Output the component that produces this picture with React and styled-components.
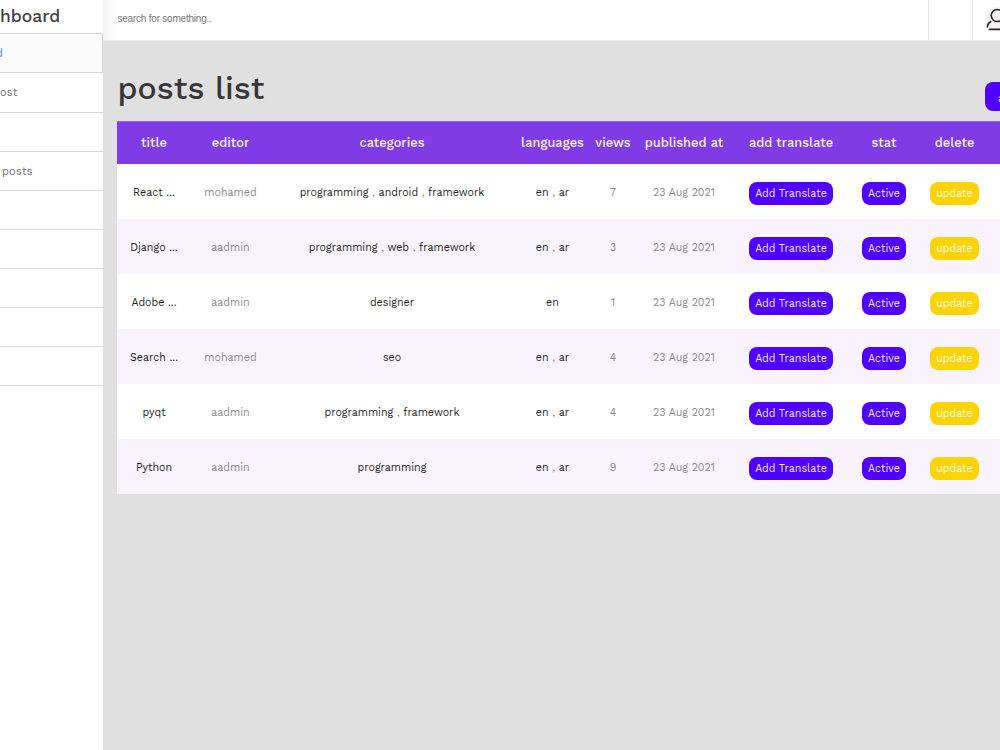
import styled, { createGlobalStyle } from 'styled-components'

const GlobalStyle = createGlobalStyle`
  * {
    box-sizing: border-box;
  }
  body {
    margin: 0;
    overflow: hidden;
    background: #e0e0e0;
    font-family: 'Work Sans', 'Inter', sans-serif;
  }
`
const Page = styled.div`
  display: flex;
  width: 100%;
  height: 100vh;
  overflow: hidden;
`
const Sidebar = styled.aside`
  flex: 0 0 103px;
  height: 100%;
  background: #fff;
  overflow: hidden;
  white-space: nowrap;
`
const Brand = styled.div`
  height: 33.4px;
  line-height: 33px;
  font-size: 17.5px;
  font-weight: 500;
  color: #423f42;
`
const MenuList = styled.ul`
  list-style: none;
  margin: 0;
  padding: 0;
  border-bottom: 1px solid #d9d9d9;
`
const MenuItem = styled.li`
  height: 39.08px;
  padding-top: 1px;
  line-height: 37px;
  text-indent: ${props => props.$indent || 0}px;
  border-top: 1px solid #d9d9d9;
  border-right: ${props => props.$active ? '1px solid #d4d4d4' : 'none'};
  background: ${props => props.$active ? '#fbfbfb' : '#fff'};
  color: ${props => props.$active ? '#5b78ff' : '#6e6e6e'};
  font-size: 11px;
  letter-spacing: 0.22px;
`
const Content = styled.div`
  flex: 1;
  min-width: 0;
  overflow: hidden;
`
const Topbar = styled.header`
  display: flex;
  height: 41px;
  border-bottom: 1px solid #e9e9e9;
  background: linear-gradient(to right, #f5f5f5, #fff 14px);
`
const SearchInput = styled.input`
  flex: 1;
  height: 37px;
  padding: 0 0 0 14.5px;
  border: none;
  outline: none;
  background: transparent;
  font-family: 'Liberation Sans', Arial, sans-serif;
  font-size: 10px;
  letter-spacing: -0.22px;
  &::placeholder {
    color: #757575;
  }
`
const TopbarCell = styled.div`
  flex: 0 0 ${props => props.$width}px;
  border-left: 1px solid #e6e6e6;
  overflow: hidden;
`
const Avatar = styled.svg`
  display: block;
  margin: 7px 0 0 11.5px;
`
const PageHead = styled.div`
  display: flex;
  justify-content: space-between;
  height: 80px;
  padding-left: 14.5px;
`
const PageTitle = styled.h1`
  margin: 0;
  padding-top: 27px;
  line-height: 40px;
  font-size: 32px;
  font-weight: 500;
  letter-spacing: 0.05px;
  color: #393539;
`
const AddButton = styled.button`
  flex: 0 0 15px;
  height: 29px;
  margin-top: 41px;
  padding: 3px 0 0 13px;
  border: none;
  border-radius: 8px 0 0 8px;
  background: #4f00ff;
  color: #fff;
  font-family: inherit;
  font-size: 11px;
  overflow: hidden;
`
const Table = styled.table`
  width: 950px;
  margin-left: 14px;
  border-collapse: collapse;
  table-layout: fixed;
  text-align: center;
`
const HeadRow = styled.tr`
  height: 43px;
  background: #7f3be6;
  box-shadow: inset 0 1px #9563e5;
`
const HeadCell = styled.th`
  width: ${props => props.$width}px;
  padding: 0;
  color: #f8f3ff;
  font-size: 12.8px;
  font-weight: 500;
  letter-spacing: 0.04px;
  white-space: nowrap;
`
const Row = styled.tr`
  height: 55px;
  background: #fff;
  &:nth-child(even) {
    background: #f8f3ff;
  }
`
const Cell = styled.td`
  padding: 1px 0 0;
  color: ${props => props.$dark ? '#231d23' : '#8c888c'};
  font-size: 10.7px;
  white-space: nowrap;
`
const Tag = styled.span`
  color: #231d23;
`
const ActionButton = styled.button`
  width: ${props => props.$width}px;
  height: 23px;
  margin-top: 3px;
  padding: 0;
  border: none;
  border-radius: 8px;
  background: ${props => props.$warning ? '#fcd405' : '#4f00ff'};
  color: ${props => props.$warning ? '#fffbe6' : '#f0eaff'};
  font-family: inherit;
  font-size: 10.7px;
  vertical-align: middle;
`

const menu = [
  { label: 'd', active: true, indent: -4 },
  { label: 'ost' },
  { label: '' },
  { label: 'posts', indent: 2 },
  { label: '' },
  { label: '' },
  { label: '' },
  { label: '' },
  { label: '' },
]

const columns = [
  { label: 'title', width: 74 },
  { label: 'editor', width: 79 },
  { label: 'categories', width: 244 },
  { label: 'languages', width: 77 },
  { label: 'views', width: 44 },
  { label: 'published at', width: 98 },
  { label: 'add translate', width: 116 },
  { label: 'stat', width: 70 },
  { label: 'delete', width: 71 },
  { label: '', width: 77 },
]

const posts = [
  { title: 'React ...', editor: 'mohamed', categories: ['programming', 'android', 'framework'], languages: ['en', 'ar'], views: 7 },
  { title: 'Django ...', editor: 'aadmin', categories: ['programming', 'web', 'framework'], languages: ['en', 'ar'], views: 3 },
  { title: 'Adobe ...', editor: 'aadmin', categories: ['designer'], languages: ['en'], views: 1 },
  { title: 'Search ...', editor: 'mohamed', categories: ['seo'], languages: ['en', 'ar'], views: 4 },
  { title: 'pyqt', editor: 'aadmin', categories: ['programming', 'framework'], languages: ['en', 'ar'], views: 4 },
  { title: 'Python', editor: 'aadmin', categories: ['programming'], languages: ['en', 'ar'], views: 9 },
]

function TagList({ items }) {
  return items.map((el, i) => (
    <span key={el}>{i > 0 && ' , '}<Tag>{el}</Tag></span>
  ))
}

function UserIcon() {
  return (
    <Avatar width="24" height="26" viewBox="0 0 24 26" fill="none">
      <circle cx="12" cy="12" r="12" fill="#f2f2f2" />
      <circle cx="12.2" cy="8.5" r="6" stroke="#2b2729" strokeWidth="1.6" />
      <path d="M6.3 14.2C3.8 15.5 2.4 17.8 2.3 20.5" stroke="#2b2729" strokeWidth="1.7" />
      <path d="M4.5 22.4H20" stroke="#2b2729" strokeWidth="1.8" strokeLinecap="round" />
      <path d="M22 20.5C21.8 17.8 20.3 15.5 18 14.2" stroke="#2b2729" strokeWidth="1.7" />
    </Avatar>
  )
}

export default function App() {
  return (
    <Page>
      <GlobalStyle />
      <Sidebar>
        <Brand>hboard</Brand>
        <MenuList>
          {menu.map((el, i) => (
            <MenuItem key={i} $active={el.active} $indent={el.indent}>{el.label}</MenuItem>
          ))}
        </MenuList>
      </Sidebar>
      <Content>
        <Topbar>
          <SearchInput placeholder="search for something.." />
          <TopbarCell $width={44} />
          <TopbarCell $width={28}><UserIcon /></TopbarCell>
        </Topbar>
        <PageHead>
          <PageTitle>posts list</PageTitle>
          <AddButton>a</AddButton>
        </PageHead>
        <Table>
          <thead>
            <HeadRow>
              {columns.map((el, i) => <HeadCell key={i} $width={el.width}>{el.label}</HeadCell>)}
            </HeadRow>
          </thead>
          <tbody>
            {posts.map(post => (
              <Row key={post.title}>
                <Cell $dark>{post.title}</Cell>
                <Cell>{post.editor}</Cell>
                <Cell><TagList items={post.categories} /></Cell>
                <Cell><TagList items={post.languages} /></Cell>
                <Cell>{post.views}</Cell>
                <Cell>23 Aug 2021</Cell>
                <Cell><ActionButton $width={84}>Add Translate</ActionButton></Cell>
                <Cell><ActionButton $width={44}>Active</ActionButton></Cell>
                <Cell><ActionButton $width={49} $warning>update</ActionButton></Cell>
                <Cell />
              </Row>
            ))}
          </tbody>
        </Table>
      </Content>
    </Page>
  )
}
